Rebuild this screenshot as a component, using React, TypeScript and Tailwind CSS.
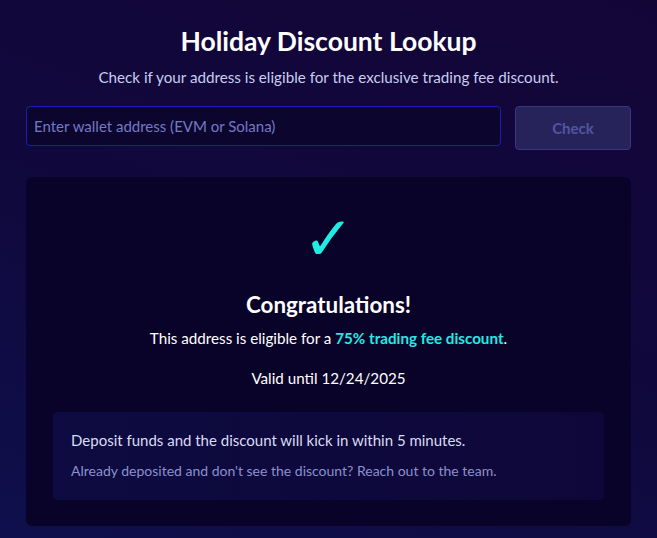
import { useState } from "react";

export default function App() {
  const [address, setAddress] = useState("");

  return (
    <div className="min-h-[538px] w-full bg-[linear-gradient(20deg,#0e0f4c_0%,#10093e_45%,#140537_100%)] font-['Lato','Noto_Sans',sans-serif] text-white">
      <div className="px-[26px] pt-[24px] pb-[13px]">
        {/* Header */}
        <h1 className="text-center text-[26.5px] font-bold leading-[34px] text-white">Holiday Discount Lookup</h1>
        <p className="mt-[9px] text-center text-[15.2px] leading-[20px] text-[#c9cdf0]">
          Check if your address is eligible for the exclusive trading fee discount.
        </p>

        {/* Search */}
        <div className="mt-[19px] flex items-start gap-[14px]">
          <input
            value={address}
            onChange={(e) => setAddress(e.target.value)}
            placeholder="Enter wallet address (EVM or Solana)"
            className="h-[40px] flex-1 rounded-[4px] border border-[#1c1cb4] bg-[#0c062f] px-[7px] text-[15px] text-white outline-none placeholder:text-[#7479c4]"
          />
          <button className="h-[44px] w-[116px] rounded-[4px] border border-[#3b3584] bg-[#25235a] text-[15px] font-bold text-[#5553a0]">
            Check
          </button>
        </div>

        {/* Result */}
        <div className="mt-[27px] rounded-[6px] bg-[#0a0329] px-[27px] pt-[30px] pb-[26px]">
          <div className="flex flex-col items-center">
            <div className="text-[61px] leading-[64px] text-[#1fede4] font-['DejaVu_Sans',sans-serif]">✓</div>
            <h2 className="mt-[20px] text-[22.4px] font-bold leading-[28px] text-white">Congratulations!</h2>
            <p className="mt-[9px] text-[15.2px] leading-[20px] text-white">
              This address is eligible for a{" "}
              <span className="font-bold text-[#22e9e4]">75% trading fee discount</span>.
            </p>
            <p className="mt-[20px] text-[15.2px] leading-[20px] text-white">Valid until 12/24/2025</p>
          </div>

          <div className="mt-[24px] rounded-[5px] bg-[linear-gradient(90deg,#0d0b41,#0f0739)] px-[18px] pt-[18px] pb-[20px]">
            <p className="text-[15px] leading-[20px] text-[#dadcf2]">Deposit funds and the discount will kick in within 5 minutes.</p>
            <p className="mt-[11px] text-[14px] leading-[19px] text-[#8d90cc]">
              Already deposited and don't see the discount? Reach out to the team.
            </p>
          </div>
        </div>
      </div>
    </div>
  );
}
